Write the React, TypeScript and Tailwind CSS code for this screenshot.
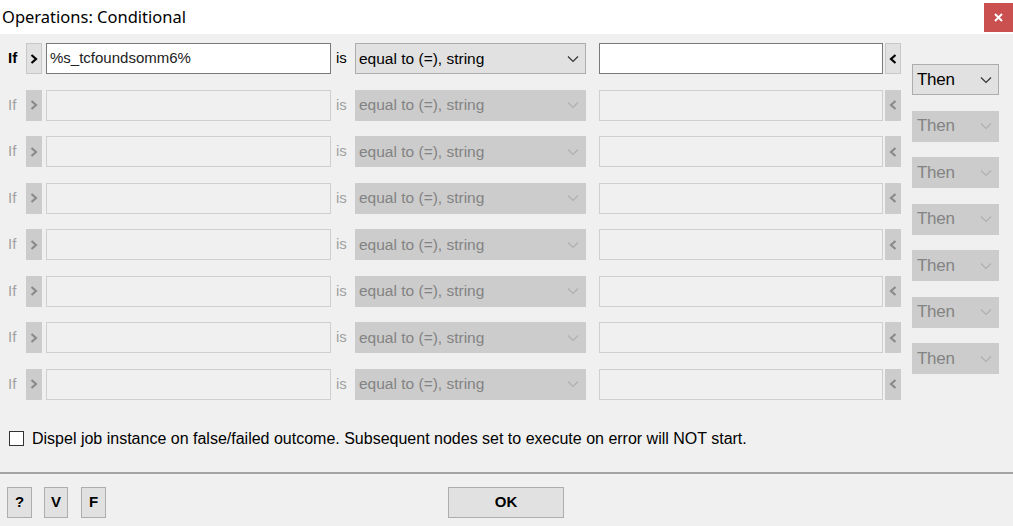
import React from "react";

const Chevron = ({ color }: { color: string }) => (
  <svg width="12" height="8" viewBox="0 0 12 8" fill="none">
    <path d="M1 1.5 L6 6.5 L11 1.5" stroke={color} strokeWidth="1.2" />
  </svg>
);

const Arrow = ({ dir, color }: { dir: "r" | "l"; color: string }) => (
  <svg width="8" height="10" viewBox="0 0 8 10" fill="none">
    <path
      d={dir === "r" ? "M1.5 1 L6 5 L1.5 9" : "M6.5 1 L2 5 L6.5 9"}
      stroke={color}
      strokeWidth="2.2"
    />
  </svg>
);

const Row = ({ active }: { active: boolean }) => (
  <div className="flex h-[31px] items-stretch">
    <div
      className={`w-[18px] flex items-center ${active ? "font-bold text-black" : "text-[#a0a0a0]"}`}
    >
      If
    </div>
    <div
      className={`w-[16px] flex items-center justify-center border ${active ? "bg-[#e1e1e1] border-[#c8c8c8]" : "bg-[#cccccc] border-[#cccccc]"}`}
    >
      <Arrow dir="r" color={active ? "#000" : "#8a8a8a"} />
    </div>
    <div
      className={`ml-[4px] w-[285px] flex items-center pl-[3px] border ${active ? "bg-white border-[#7a7a7a]" : "bg-[#f0f0f0] border-[#cfcfcf]"}`}
    >
      {active ? <span className="text-[#222]">%s_tcfoundsomm6%</span> : null}
    </div>
    <div
      className={`w-[24px] flex items-center pl-[5px] ${active ? "text-black" : "text-[#a0a0a0]"}`}
    >
      is
    </div>
    <div
      className={`w-[231px] flex items-center justify-between pl-[3px] pr-[6px] border text-[15.5px] ${active ? "bg-[#e1e1e1] border-[#adadad] text-black" : "bg-[#cccccc] border-[#cccccc] text-[#838383]"}`}
    >
      <span>equal to (=), string</span>
      <Chevron color={active ? "#333" : "#b0b0b0"} />
    </div>
    <div
      className={`ml-[13px] w-[284px] border ${active ? "bg-white border-[#7a7a7a]" : "bg-[#f0f0f0] border-[#cfcfcf]"}`}
    />
    <div
      className={`ml-[2px] w-[16px] flex items-center justify-center border ${active ? "bg-[#e1e1e1] border-[#c8c8c8]" : "bg-[#cccccc] border-[#cccccc]"}`}
    >
      <Arrow dir="l" color={active ? "#000" : "#8a8a8a"} />
    </div>
  </div>
);

const ThenSel = ({ active }: { active: boolean }) => (
  <div
    className={`h-[31px] w-[87px] flex items-center justify-between pl-[4px] pr-[6px] border ${active ? "bg-[#e1e1e1] border-[#adadad] text-black" : "bg-[#cccccc] border-[#cccccc] text-[#838383]"}`}
  >
    <span className="text-[17px] tracking-[-0.3px]">Then</span>
    <Chevron color={active ? "#333" : "#b0b0b0"} />
  </div>
);

const SmallBtn = ({ label, w }: { label: string; w: string }) => (
  <div
    className={`${w} h-[31px] flex items-center justify-center bg-[#e1e1e1] border border-[#adadad] font-bold text-[15px] text-black`}
  >
    {label}
  </div>
);

export default function App() {
  const rows = [0, 1, 2, 3, 4, 5, 6, 7];
  const thens = [0, 1, 2, 3, 4, 5, 6];
  return (
    <div
      className="w-[1013px] h-[526px] bg-[#f0f0f0] flex flex-col overflow-hidden text-[15px]"
      style={{ fontFamily: '"Liberation Sans", Arial, sans-serif' }}
    >
      <div className="h-[34px] bg-white flex items-center justify-between pl-[2px]">
        <span className="text-[16.5px] text-black" style={{ fontFamily: '"Noto Sans", sans-serif' }}>
          Operations: Conditional
        </span>
        <div className="w-[29px] h-[29px] bg-[#c9504f] flex items-center justify-center self-start mt-[3px]">
          <svg width="9" height="9" viewBox="0 0 9 9">
            <path d="M1 1 L8 8 M8 1 L1 8" stroke="white" strokeWidth="2" />
          </svg>
        </div>
      </div>
      <div className="flex pl-[8px] pt-[9px]">
        <div className="flex flex-col gap-[15.5px]">
          {rows.map((i) => (
            <Row key={i} active={i === 0} />
          ))}
        </div>
        <div className="ml-[11px] pt-[21px] flex flex-col gap-[15.5px]">
          {thens.map((i) => (
            <ThenSel key={i} active={i === 0} />
          ))}
        </div>
      </div>
      <div className="flex items-center mt-[31px] pl-[9px] h-[16px]">
        <div className="w-[15px] h-[15px] bg-white border border-[#333]" />
        <span className="ml-[8px] text-black text-[16px]">
          Dispel job instance on false/failed outcome. Subsequent nodes set to execute on error will NOT start.
        </span>
      </div>
      <div className="mt-[25px] h-[2px] bg-[#a3a3a3]" />
      <div className="flex items-center mt-[13px] pl-[7px]">
        <SmallBtn label="?" w="w-[25px]" />
        <div className="ml-[12px]">
          <SmallBtn label="V" w="w-[24px]" />
        </div>
        <div className="ml-[13px]">
          <SmallBtn label="F" w="w-[25px]" />
        </div>
        <div className="ml-[342px]">
          <SmallBtn label="OK" w="w-[116px]" />
        </div>
      </div>
    </div>
  );
}
